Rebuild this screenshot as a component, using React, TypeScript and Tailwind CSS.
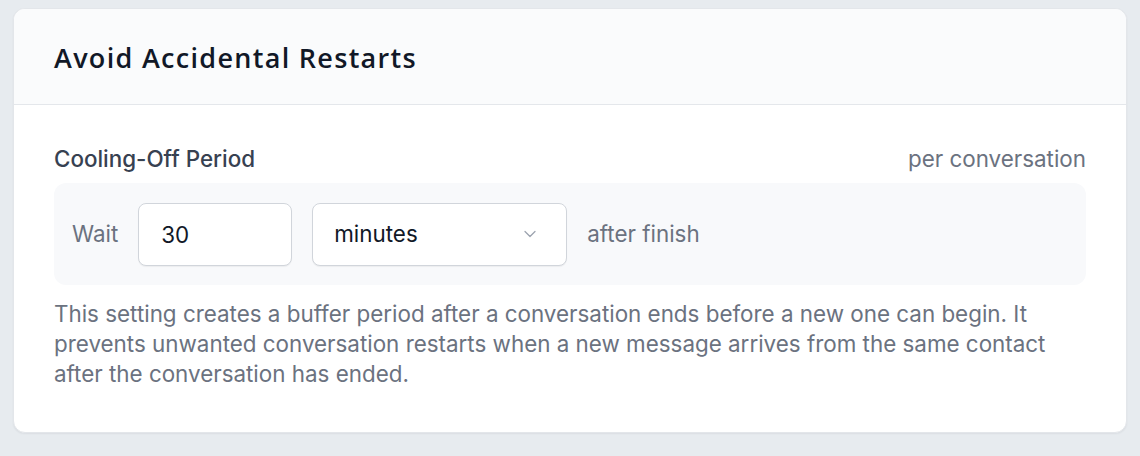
import React from 'react';
import { ChevronDown } from 'lucide-react';

const SettingsCard = () => {
  const [amount, setAmount] = React.useState('30');
  const [unit, setUnit] = React.useState('minutes');

  return (
    <div className="bg-white rounded-xl border border-[#e3e6ea] shadow-[0_1px_2px_rgba(16,24,40,0.06)] overflow-hidden">
      <div className="h-[96px] bg-[#fafbfc] border-b border-[#e4e7eb] px-10 flex items-center">
        <h2 className="text-[27px] font-semibold text-[#111827] tracking-[1.3px] font-['Open_Sans',sans-serif] pt-[3px]">
          Avoid Accidental Restarts
        </h2>
      </div>

      <div className="px-10 pt-[40px] pb-[43px] font-['Inter',sans-serif]">
        <div className="flex items-center justify-between mb-[10px] text-[22.4px] leading-[28px]">
          <span className="text-[#374151] font-medium">Cooling-Off Period</span>
          <span className="text-[#6b7280]">per conversation</span>
        </div>

        <div className="bg-[#f8f9fb] rounded-xl h-[102px] px-[18px] flex items-center gap-5 text-[22.4px]">
          <span className="text-[#6b7280]">Wait</span>
          <input
            value={amount}
            onChange={(e) => setAmount(e.target.value)}
            className="w-[154px] h-[63px] bg-white border border-[#d1d5db] rounded-lg px-[22px] text-[#111827] outline-none shadow-[0_1px_1px_rgba(0,0,0,0.05)]"
          />
          <button
            onClick={() => setUnit(unit === 'minutes' ? 'hours' : 'minutes')}
            className="w-[255px] h-[63px] bg-white border border-[#d1d5db] rounded-lg pl-[21px] pr-[26px] flex items-center justify-between text-[#111827] shadow-[0_1px_1px_rgba(0,0,0,0.05)]"
          >
            <span>{unit}</span>
            <ChevronDown size={20} strokeWidth={1.5} className="text-[#9ca3af]" />
          </button>
          <span className="text-[#6b7280]">after finish</span>
        </div>

        <p className="mt-[14px] text-[22.4px] leading-[30px] text-[#6b7280]">
          This setting creates a buffer period after a conversation ends before a new one can begin. It
          prevents unwanted conversation restarts when a new message arrives from the same contact
          after the conversation has ended.
        </p>
      </div>
    </div>
  );
};

export default function App() {
  return (
    <div className="min-h-screen bg-[#e7ebef] px-[13px] pt-[8px] pb-6">
      <SettingsCard />
    </div>
  );
}
